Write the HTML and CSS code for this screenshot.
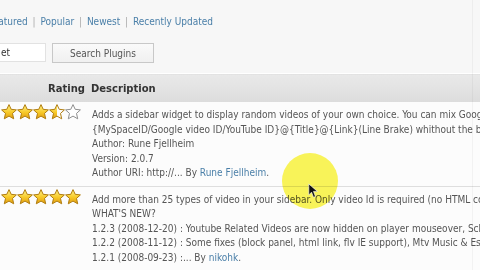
FILE: index.html
```html
<!DOCTYPE html>
<html lang="en">
<head>
    <meta charset="UTF-8">
    <title>Plugin Browser</title>
    <link rel="stylesheet" href="styles.css">
</head>
<body>
    <div class="page">
        <div class="subnav">
            <a href="#" class="first">Featured</a> <span class="sep">|</span>
            <a href="#">Popular</a> <span class="sep">|</span>
            <a href="#">Newest</a> <span class="sep">|</span>
            <a href="#">Recently Updated</a>
        </div>
        <form class="search">
            <input type="text" value="et">
            <button type="button">Search Plugins</button>
        </form>
        <table class="plugins">
            <thead>
                <tr>
                    <th class="col-rating">Rating</th>
                    <th class="col-desc">Description</th>
                </tr>
            </thead>
            <tbody>
                <tr>
                    <td class="col-rating">
                        <div class="stars">
                            <svg viewBox="0 0 16 16"><use href="#star-full"/></svg>
                            <svg viewBox="0 0 16 16"><use href="#star-full"/></svg>
                            <svg viewBox="0 0 16 16"><use href="#star-full"/></svg>
                            <svg viewBox="0 0 16 16"><use href="#star-half"/></svg>
                            <svg viewBox="0 0 16 16"><use href="#star-empty"/></svg>
                        </div>
                    </td>
                    <td class="col-desc">
                        <p>Adds a sidebar widget to display random videos of your own choice. You can mix Google Video, YouTube and MySpace</p>
                        <p>{MySpaceID/Google video ID/YouTube ID}@{Title}@{Link}(Line Brake) whithout the brackets</p>
                        <p>Author: Rune Fjellheim</p>
                        <p>Version: 2.0.7</p>
                        <p>Author URI: http://... By <a href="#">Rune Fjellheim</a>.</p>
                    </td>
                </tr>
                <tr>
                    <td class="col-rating">
                        <div class="stars">
                            <svg viewBox="0 0 16 16"><use href="#star-full"/></svg>
                            <svg viewBox="0 0 16 16"><use href="#star-full"/></svg>
                            <svg viewBox="0 0 16 16"><use href="#star-full"/></svg>
                            <svg viewBox="0 0 16 16"><use href="#star-full"/></svg>
                            <svg viewBox="0 0 16 16"><use href="#star-full"/></svg>
                        </div>
                    </td>
                    <td class="col-desc">
                        <p>Add more than 25 types of video in your sidebar. Only video Id is required (no HTML code)</p>
                        <p>WHAT'S NEW?</p>
                        <p>1.2.3 (2008-12-20) : Youtube Related Videos are now hidden on player mouseover, Schedule</p>
                        <p>1.2.2 (2008-11-12) : Some fixes (block panel, html link, flv IE support), Mtv Music &amp; Espn</p>
                        <p>1.2.1 (2008-09-23) :... By <a href="#">nikohk</a>.</p>
                    </td>
                </tr>
            </tbody>
        </table>
        <div class="edge"></div>
        <div class="pointer">
            <svg viewBox="0 0 14 20" width="11" height="16"><path d="M1 1 L1 15 L4.5 11.5 L7 18 L9.5 17 L7 10.5 L12 10.5 Z" fill="#111" stroke="#fff" stroke-width="0.8"/></svg>
        </div>
    </div>

    <svg width="0" height="0" style="position:absolute">
        <defs>
            <linearGradient id="gold" x1="0" y1="0" x2="0" y2="1">
                <stop offset="0" stop-color="#fff38a"/>
                <stop offset="0.55" stop-color="#f7c928"/>
                <stop offset="1" stop-color="#e09a10"/>
            </linearGradient>
            <symbol id="star-full" viewBox="0 0 16 16">
                <path d="M8 0.6 L10.2 5.3 L15.4 5.9 L11.5 9.4 L12.7 14.8 L8 12.1 L3.3 14.8 L4.5 9.4 L0.6 5.9 L5.8 5.3 Z" fill="url(#gold)" stroke="#b07d10" stroke-width="1" stroke-linejoin="round"/>
            </symbol>
            <symbol id="star-half" viewBox="0 0 16 16">
                <path d="M8 0.6 L8 12.1 L3.3 14.8 L4.5 9.4 L0.6 5.9 L5.8 5.3 Z" fill="url(#gold)"/>
                <path d="M8 0.6 L10.2 5.3 L15.4 5.9 L11.5 9.4 L12.7 14.8 L8 12.1 L3.3 14.8 L4.5 9.4 L0.6 5.9 L5.8 5.3 Z" fill="none" stroke="#b07d10" stroke-width="1" stroke-linejoin="round"/>
            </symbol>
            <symbol id="star-empty" viewBox="0 0 16 16">
                <path d="M8 0.6 L10.2 5.3 L15.4 5.9 L11.5 9.4 L12.7 14.8 L8 12.1 L3.3 14.8 L4.5 9.4 L0.6 5.9 L5.8 5.3 Z" fill="#fff" stroke="#8f8f8f" stroke-width="1" stroke-linejoin="round"/>
            </symbol>
        </defs>
    </svg>
</body>
</html>
```

FILE: styles.css
```css
body{
    margin: 0;
    background: #f7f7f7;
    font-family: "DejaVu Sans", Verdana, sans-serif;
    font-stretch: condensed;
    font-size: 10px;
    color: #555;
    overflow: hidden;
}
.page{
    position: relative;
    width: 480px;
    height: 270px;
    overflow: hidden;
}
a{
    color: #4a7fa8;
    text-decoration: none;
}
.subnav{
    padding-top: 16px;
    height: 13px;
    white-space: nowrap;
    margin-left: -12px;
}
.subnav .sep{
    color: #aaa;
    margin: 0 2px;
}
.search{
    display: flex;
    gap: 6px;
    margin-top: 14px;
    height: 19px;
}
.search input{
    width: 46px;
    box-sizing: border-box;
    height: 19px;
    border: 1px solid #e2e2e2;
    border-left: 0;
    background: #fff;
    font: inherit;
    color: #333;
    padding: 0 0 0 1px;
}
.search button{
    width: 102px;
    height: 20px;
    border: 1px solid #c8c8c8;
    background: linear-gradient(#fafafa, #f0f0f0);
    font: inherit;
    color: #555;
    padding: 0;
}
.plugins{
    margin-top: 11px;
    border-collapse: collapse;
    width: 620px;
    table-layout: fixed;
}
.plugins th{
    height: 28px;
    padding: 0;
    background: linear-gradient(#e9e9e9, #dcdcdc);
    border-top: 1px solid #fff;
    font-weight: bold;
    font-stretch: normal;
    color: #333;
    text-align: left;
}
.plugins th.col-rating{
    width: 91px;
    text-align: right;
    padding-right: 6px;
    box-sizing: border-box;
}
.plugins td{
    vertical-align: top;
    background: #fcfcfc;
    border-bottom: 1px solid #dedede;
    padding: 0;
}
.plugins td.col-desc{
    padding: 6px 0 5px 1px;
    white-space: nowrap;
}
.plugins td p{
    margin: 0;
    line-height: 14.5px;
}
.stars{
    display: flex;
    padding: 2px 0 0 1px;
}
.stars svg{
    width: 16px;
    height: 16px;
}
.edge{
    position: absolute;
    top: 0;
    right: 7px;
    width: 1px;
    height: 270px;
    background: rgba(0,0,0,0.04);
}
.pointer{
    position: absolute;
    left: 282px;
    top: 153px;
    width: 56px;
    height: 56px;
    border-radius: 50%;
    background: #fbf65a;
    mix-blend-mode: multiply;
}
.pointer svg{
    position: absolute;
    left: 26px;
    top: 30px;
}
```
